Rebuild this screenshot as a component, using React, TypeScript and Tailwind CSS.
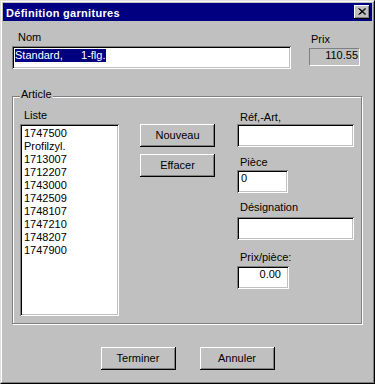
import React from "react";

const sunken =
  "shadow-[inset_1px_1px_0_#808080,inset_-1px_-1px_0_#ffffff,inset_2px_2px_0_#000000,inset_-2px_-2px_0_#c0c0c0]";
const raised =
  "shadow-[inset_-1px_-1px_0_#000000,inset_1px_1px_0_#ffffff,inset_-2px_-2px_0_#808080]";

const items = [
  "1747500",
  "Profilzyl.",
  "1713007",
  "1712207",
  "1743000",
  "1742509",
  "1748107",
  "1747210",
  "1748207",
  "1747900",
];

function Btn({ label, className = "" }: { label: string; className?: string }) {
  return (
    <div
      className={`flex h-[23px] w-[75px] items-center justify-center bg-[#c0c0c0] pb-[1px] ${raised} ${className}`}
    >
      {label}
    </div>
  );
}

function Field({
  w,
  value,
  right,
  className = "",
}: {
  w: string;
  value?: string;
  right?: boolean;
  className?: string;
}) {
  return (
    <div
      className={`h-[23px] ${w} bg-white pt-[2px] ${right ? "pr-[8px] text-right" : "pl-[4px]"} ${sunken} ${className}`}
    >
      {value}
    </div>
  );
}

export default function App() {
  return (
    <div className="h-[384px] w-[375px] border border-t-[#dfdfdf] border-l-[#dfdfdf] border-b-black border-r-black bg-[#c0c0c0] font-['Liberation_Sans',Arial,sans-serif] text-[11px] leading-[13px] text-black">
      <div className="h-full w-full border border-t-white border-l-white border-b-[#808080] border-r-[#808080] p-[1px]">
        {/* title bar */}
        <div className="flex h-[18px] items-start justify-between bg-[#000080] pl-[3px] pr-[2px]">
          <span className="pt-[4px] font-bold tracking-[0.3px] text-white">
            Définition garnitures
          </span>
          <div
            className={`mt-[2px] flex h-[14px] w-[16px] items-center justify-center bg-[#c0c0c0] ${raised}`}
          >
            <svg width="8" height="7" viewBox="0 0 8 7" className="mb-[1px]">
              <path d="M0.5 0.5 L7 6.5 M1.5 0.5 L8 6.5 M7 0.5 L0.5 6.5 M8 0.5 L1.5 6.5" stroke="#000" strokeWidth="1" />
            </svg>
          </div>
        </div>

        {/* Nom / Prix */}
        <div className="flex">
          <div className="ml-[9px] flex flex-col pt-[10px]">
            <span className="pl-[6px]">Nom</span>
            <div className={`mt-[2px] h-[23px] w-[279px] bg-white pl-[3px] pt-[3px] ${sunken}`}>
              <span className="inline-block h-[13px] whitespace-pre bg-[#000080] leading-[13px] text-white">
                {"Standard,      1-flg."}
              </span>
            </div>
          </div>
          <div className="ml-[18px] flex flex-col pt-[12px]">
            <span className="pl-[2px]">Prix</span>
            <div className="mt-[2px] h-[18px] w-[51px] border border-t-[#808080] border-l-[#808080] border-b-white border-r-white pr-[1px] text-right">
              110.55
            </div>
          </div>
        </div>

        {/* Article group */}
        <div className="relative ml-[9px] mt-[27px] flex h-[228px] w-[350px] border border-[#808080] pl-[7px] shadow-[inset_1px_1px_0_#ffffff,1px_1px_0_#ffffff]">
          <span className="absolute left-[7px] top-[-9px] bg-[#c0c0c0] px-[1px]">Article</span>

          <div className="flex flex-col pt-[12px]">
            <span className="pl-[4px]">Liste</span>
            <div className={`mt-[2px] h-[192px] w-[99px] bg-white pl-[4px] pt-[3px] ${sunken}`}>
              {items.map((it) => (
                <div key={it}>{it}</div>
              ))}
            </div>
          </div>

          <div className="ml-[21px] flex flex-col gap-[7px] pt-[27px]">
            <Btn label="Nouveau" />
            <Btn label="Effacer" />
          </div>

          <div className="ml-[22px] flex flex-col pt-[14px]">
            <span className="pl-[3px]">Réf,-Art,</span>
            <Field w="w-[117px]" />
            <span className="mt-[9px] pl-[3px]">Pièce</span>
            <Field w="w-[51px]" value="0" className="mt-[1px]" />
            <span className="mt-[8px] pl-[3px]">Désignation</span>
            <Field w="w-[117px]" className="mt-[3px]" />
            <span className="mt-[11px] pl-[3px]">Prix/pièce:</span>
            <Field w="w-[52px]" value="0.00" right className="mt-[2px]" />
          </div>
        </div>

        {/* footer */}
        <div className="mt-[23px] flex justify-center gap-[24px]">
          <Btn label="Terminer" />
          <Btn label="Annuler" />
        </div>
      </div>
    </div>
  );
}
